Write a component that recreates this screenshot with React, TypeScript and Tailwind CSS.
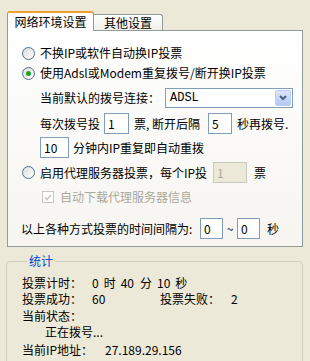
import React from 'react';

const Radio: React.FC<{ checked?: boolean }> = ({ checked }) => (
    <span className="flex h-[13px] w-[13px] shrink-0 items-center justify-center rounded-full border border-[#4e7194] bg-linear-to-br from-[#dcdcd7] to-white">
        {checked && <span className="h-[5px] w-[5px] rounded-full bg-[#21a121]" />}
    </span>
);

const Box: React.FC<{ value: string; className: string; disabled?: boolean }> = ({ value, className, disabled }) => (
    <span
        className={
            disabled
                ? `flex h-[21px] shrink-0 items-center border border-[#c9c7ba] bg-[#ece9d8] px-[3px] text-[#aca899] ${className}`
                : `flex h-[21px] shrink-0 items-center border border-[#7f9db9] bg-white px-[3px] ${className}`
        }
    >
        {value}
    </span>
);

const App: React.FC = () => {
    return (
        <div className="h-[361px] w-[310px] overflow-hidden bg-[#ece9d8] pl-[7px] pt-[11px] font-['Noto_Sans_CJK_SC',sans-serif] text-[12px] leading-[16px] text-black">
            {/* tabs */}
            <div className="flex h-[19px] items-end">
                <div className="relative z-10 -mb-px flex h-[20px] w-[87px] items-center justify-center rounded-t-[3px] border-x border-t-2 border-x-[#919b9c] border-t-[#f0a030] bg-white">
                    网络环境设置
                </div>
                <div className="flex h-[16px] w-[69px] items-center justify-center rounded-tr-[3px] border-r border-t border-[#919b9c] bg-linear-to-b from-white to-[#f0efe8]">
                    其他设置
                </div>
            </div>

            {/* tab panel */}
            <div className="w-[296px] border border-[#919b9c] bg-linear-to-b from-white to-[#f6f5f0] pb-[7px] pt-[12px]">
                <div className="flex h-[20px] items-center pl-[14px]">
                    <Radio />
                    <span className="ml-[5px]">不换IP或软件自动换IP投票</span>
                </div>
                <div className="flex h-[20px] items-center pl-[14px]">
                    <Radio checked />
                    <span className="ml-[5px]">使用Adsl或Modem重复拨号/断开换IP投票</span>
                </div>

                <div className="mt-[5px] flex h-[20px] items-center pl-[32px]">
                    <span className="w-[125px] whitespace-nowrap">当前默认的拨号连接：</span>
                    <div className="flex h-[20px] w-[128px] items-center justify-between border border-[#7f9db9] bg-white pl-[4px] pr-px">
                        <span className="font-['Liberation_Mono',monospace] text-[12px]">ADSL</span>
                        <span className="flex h-[16px] w-[16px] items-center justify-center rounded-[2px] border border-[#b9cdf5] bg-linear-to-b from-[#dbe5fd] to-[#b4c8f6]">
                            <svg width="8" height="6" viewBox="0 0 8 6">
                                <path d="M1 1 L4 4 L7 1" fill="none" stroke="#4d6185" strokeWidth="2" />
                            </svg>
                        </span>
                    </div>
                </div>

                <div className="mt-[5px] flex items-center pl-[32px]">
                    <span className="w-[64px] whitespace-nowrap">每次拨号投</span>
                    <Box value="1" className="w-[25px]" />
                    <span className="w-[79px] whitespace-nowrap pl-[5px]">票, 断开后隔</span>
                    <Box value="5" className="w-[24px]" />
                    <span className="ml-[5px] whitespace-nowrap">秒再拨号.</span>
                </div>

                <div className="mt-[3px] flex items-center pl-[32px]">
                    <Box value="10" className="w-[29px]" />
                    <span className="ml-[4px] whitespace-nowrap">分钟内IP重复即自动重拨</span>
                </div>

                <div className="mt-[4px] flex items-center pl-[14px]">
                    <Radio />
                    <span className="ml-[5px] w-[173px] whitespace-nowrap">启用代理服务器投票，每个IP投</span>
                    <Box value="1" className="w-[34px]" disabled />
                    <span className="ml-[7px]">票</span>
                </div>

                <div className="mt-[6px] flex h-[16px] items-center pl-[34px]">
                    <span className="flex h-[12px] w-[12px] items-center justify-center border border-[#cac8bb] bg-white">
                        <svg width="8" height="7" viewBox="0 0 8 7">
                            <path d="M1 3.5 L3 5.5 L7 1" fill="none" stroke="#cac8bb" strokeWidth="1.6" />
                        </svg>
                    </span>
                    <span className="ml-[6px] text-[#aca899]">自动下载代理服务器信息</span>
                </div>

                <div className="mt-[13px] flex items-center pl-[13px]">
                    <span className="w-[179px] whitespace-nowrap">以上各种方式投票的时间间隔为:</span>
                    <Box value="0" className="w-[23px]" />
                    <span className="w-[14px] text-center">~</span>
                    <Box value="0" className="w-[23px]" />
                    <span className="ml-[7px]">秒</span>
                </div>
            </div>

            {/* statistics group */}
            <fieldset className="-ml-px mt-[6px] h-[140px] w-[297px] rounded-[4px] border border-[#d0d0bf] pl-[15px]">
                <legend className="ml-[5px] px-[2px] text-[#0046d5]">统计</legend>
                <div className="mt-[6px] flex h-[15px] items-center">
                    <span className="w-[70px]">投票计时：</span>
                    <span>0</span>
                    <span className="ml-[5px]">时</span>
                    <span className="ml-[5px]">40</span>
                    <span className="ml-[6px]">分</span>
                    <span className="ml-[5px]">10</span>
                    <span className="ml-[5px]">秒</span>
                </div>
                <div className="mt-px flex h-[16px] items-center">
                    <span className="w-[70px]">投票成功：</span>
                    <span className="w-[68px]">60</span>
                    <span className="w-[71px]">投票失败：</span>
                    <span>2</span>
                </div>
                <div className="mt-[1px] flex h-[16px] items-center">当前状态：</div>
                <div className="flex h-[16px] items-center pl-[23px]">正在拨号...</div>
                <div className="mt-[2px] flex h-[16px] items-center">
                    <span className="w-[83px]">当前IP地址：</span>
                    <span>27.189.29.156</span>
                </div>
            </fieldset>
        </div>
    );
};

export default App;
